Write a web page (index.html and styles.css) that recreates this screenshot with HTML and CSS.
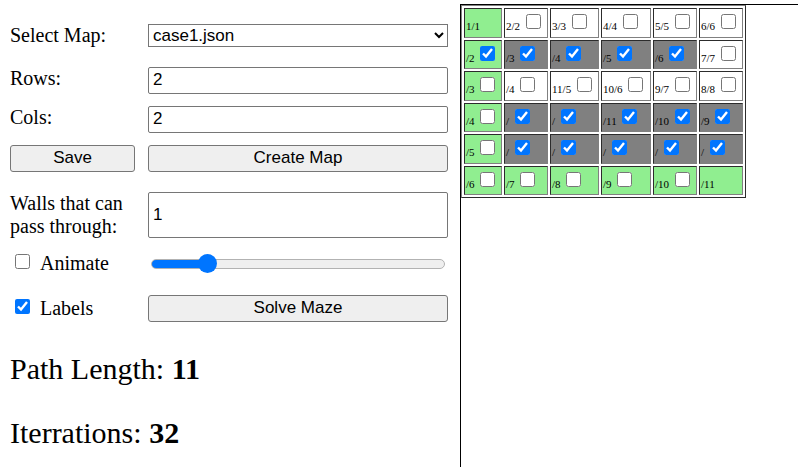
FILE: index.html
```
<!DOCTYPE html>
<html lang="en">
<head>
<meta charset="utf-8">
<title>Maze Solver</title>
<link rel="stylesheet" href="styles.css">
</head>
<body>
<main class="app">
  <section class="panel">
    <form class="controls">
      <label for="map">Select Map:</label>
      <select id="map"><option>case1.json</option></select>
      <label class="top" for="rows">Rows:</label>
      <input class="field" id="rows" type="text" value="2">
      <label class="top" for="cols">Cols:</label>
      <input class="field" id="cols" type="text" value="2">
      <button type="button">Save</button>
      <button type="button">Create Map</button>
      <label class="group" for="walls">Walls that can pass through:</label>
      <input class="field group" id="walls" type="text" value="1">
      <label class="check"><input type="checkbox">Animate</label>
      <input class="speed" type="range" min="0" max="100" value="17" aria-label="Animation speed">
      <label class="check"><input type="checkbox" checked>Labels</label>
      <button type="button">Solve Maze</button>
    </form>
    <p class="result">Path Length: <b>11</b></p>
    <p class="result">Iterrations: <b>32</b></p>
  </section>
  <section class="board">
    <table class="maze">
      <colgroup><col class="c38"><col class="c44"><col class="c49"><col class="c50"><col class="c44"><col class="c44"></colgroup>
      <tbody>
      <tr>
        <td class="path">1/1</td>
        <td><label>2/2 <input type="checkbox"></label></td>
        <td><label>3/3 <input type="checkbox"></label></td>
        <td><label>4/4 <input type="checkbox"></label></td>
        <td><label>5/5 <input type="checkbox"></label></td>
        <td><label>6/6 <input type="checkbox"></label></td>
      </tr>
      <tr>
        <td class="path"><label>/2 <input type="checkbox" checked></label></td>
        <td class="wall"><label>/3 <input type="checkbox" checked></label></td>
        <td class="wall"><label>/4 <input type="checkbox" checked></label></td>
        <td class="wall"><label>/5 <input type="checkbox" checked></label></td>
        <td class="wall"><label>/6 <input type="checkbox" checked></label></td>
        <td><label>7/7 <input type="checkbox"></label></td>
      </tr>
      <tr>
        <td class="path"><label>/3 <input type="checkbox"></label></td>
        <td><label>/4 <input type="checkbox"></label></td>
        <td><label>11/5 <input type="checkbox"></label></td>
        <td><label>10/6 <input type="checkbox"></label></td>
        <td><label>9/7 <input type="checkbox"></label></td>
        <td><label>8/8 <input type="checkbox"></label></td>
      </tr>
      <tr>
        <td class="path"><label>/4 <input type="checkbox"></label></td>
        <td class="wall"><label>/ <input type="checkbox" checked></label></td>
        <td class="wall"><label>/ <input type="checkbox" checked></label></td>
        <td class="wall"><label>/11 <input type="checkbox" checked></label></td>
        <td class="wall"><label>/10 <input type="checkbox" checked></label></td>
        <td class="wall"><label>/9 <input type="checkbox" checked></label></td>
      </tr>
      <tr>
        <td class="path"><label>/5 <input type="checkbox"></label></td>
        <td class="wall"><label>/ <input type="checkbox" checked></label></td>
        <td class="wall"><label>/ <input type="checkbox" checked></label></td>
        <td class="wall"><label>/ <input type="checkbox" checked></label></td>
        <td class="wall"><label>/ <input type="checkbox" checked></label></td>
        <td class="wall"><label>/ <input type="checkbox" checked></label></td>
      </tr>
      <tr>
        <td class="path"><label>/6 <input type="checkbox"></label></td>
        <td class="path"><label>/7 <input type="checkbox"></label></td>
        <td class="path"><label>/8 <input type="checkbox"></label></td>
        <td class="path"><label>/9 <input type="checkbox"></label></td>
        <td class="path"><label>/10 <input type="checkbox"></label></td>
        <td class="path">/11</td>
      </tr>
      </tbody>
    </table>
  </section>
</main>
</body>
</html>
```
FILE: styles.css
```
* {
  box-sizing: border-box;
}

body {
  margin: 0;
  background: #fff;
  color: #000;
  font: 20px/23px "Liberation Serif", serif;
}

.app {
  display: flex;
  min-height: 100vh;
  padding-top: 4px;
}

.panel {
  flex: none;
  padding: 12px 12px 0 10px;
}

.controls {
  display: grid;
  grid-template-columns: 125px 300px;
  grid-template-rows: 39px 27px 27px 27px 54px 27px 39px;
  gap: 12px 13px;
  align-items: center;
}

.controls button,
.controls select,
.field {
  width: 100%;
  margin: 0;
  border: 1px solid #767676;
  color: #000;
  font: 17px "Liberation Sans", sans-serif;
}

.controls select {
  height: 23px;
  padding: 0;
  border-radius: 0;
  background-color: #fff;
}

.controls button {
  height: 27px;
  padding: 0 4px 2px;
  border-radius: 3px;
  background: #efefef;
}

.field {
  height: 27px;
  padding: 0 4px 2px;
  border-radius: 2px;
  background: #fff;
}

.top {
  align-self: start;
}

.group {
  align-self: end;
}

.field.group {
  height: 46px;
  padding-bottom: 0;
}

input[type="checkbox"] {
  width: 15px;
  height: 15px;
  margin: 0;
}

.check {
  display: flex;
  gap: 10px;
  padding-left: 5px;
}

.check input {
  margin-top: 2px;
}

.speed {
  appearance: none;
  height: 19px;
  margin: 0 3px;
  background: none;
}

.speed::-webkit-slider-runnable-track {
  height: 10px;
  border: 1px solid #b2b2b2;
  border-radius: 5px;
  background: linear-gradient(to right, #0075ff 18%, #efefef 18%) border-box;
}

.speed::-webkit-slider-thumb {
  appearance: none;
  width: 19px;
  height: 19px;
  margin-top: -6px;
  border-radius: 50%;
  background: #0075ff;
}

.result {
  margin: 24px 0 30px;
  font-size: 30px;
  line-height: 34px;
}

.result + .result {
  margin-top: 30px;
}

.board {
  flex: 1;
  border-top: 1px solid #000;
  border-left: 1px solid #000;
}

.maze {
  height: 193px;
  border: 1px solid;
  border-color: #808080 #2c2c2c #2c2c2c #808080;
  border-spacing: 2px;
  font-size: 11px;
  line-height: 20px;
}

.maze td {
  padding: 5px 1px 0;
  border: 1px solid;
  border-color: #2c2c2c #808080 #808080 #2c2c2c;
  vertical-align: baseline;
  white-space: nowrap;
}

.maze input {
  margin: 0 3px;
  vertical-align: 1px;
}

.maze .path {
  background: #90ee90;
}

.maze .wall {
  background: #808080;
}

.c38 {
  width: 38px;
}

.c44 {
  width: 44px;
}

.c49 {
  width: 49px;
}

.c50 {
  width: 50px;
}
```
